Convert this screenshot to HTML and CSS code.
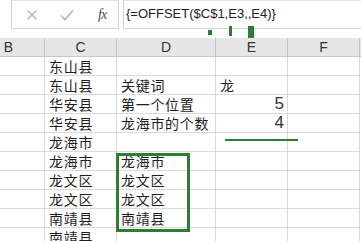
FILE: index.html
```html
<!DOCTYPE html>
<html lang="zh">
<head>
    <meta charset="UTF-8">
    <title>OFFSET</title>
    <link rel="stylesheet" href="styles.css">
</head>
<body>
    <div class="fbar">
        <div class="fx-box">
            <svg class="ico" width="12" height="12" viewBox="0 0 12 12"><path d="M1.5 1.5 L10.5 10.5 M10.5 1.5 L1.5 10.5" stroke="#b4b4b4" stroke-width="1.4" fill="none"/></svg>
            <svg class="ico" width="14" height="12" viewBox="0 0 14 12"><path d="M1 6.5 L5 10.5 L13 1.5" stroke="#b4b4b4" stroke-width="1.6" fill="none"/></svg>
            <span class="fx">fx</span>
        </div>
        <div class="formula">{=OFFSET($C$1,E3,,E4)}</div>
    </div>
    <div class="gap">
        <span class="mark m1"></span>
        <span class="mark m2"></span>
        <span class="mark m3"></span>
    </div>
    <div class="sheet">
        <div class="head">
            <div class="hc">B</div>
            <div class="hc">C</div>
            <div class="hc">D</div>
            <div class="hc">E</div>
            <div class="hc">F</div>
        </div>
        <div class="grid">
            <div class="c"></div><div class="c">东山县</div><div class="c"></div><div class="c"></div><div class="c"></div>
            <div class="c"></div><div class="c">东山县</div><div class="c">关键词</div><div class="c">龙</div><div class="c"></div>
            <div class="c"></div><div class="c">华安县</div><div class="c">第一个位置</div><div class="c num">5</div><div class="c"></div>
            <div class="c"></div><div class="c">华安县</div><div class="c">龙海市的个数</div><div class="c num">4</div><div class="c"></div>
            <div class="c"></div><div class="c">龙海市</div><div class="c"></div><div class="c"></div><div class="c"></div>
            <div class="c"></div><div class="c">龙海市</div><div class="c">龙海市</div><div class="c"></div><div class="c"></div>
            <div class="c"></div><div class="c">龙文区</div><div class="c">龙文区</div><div class="c"></div><div class="c"></div>
            <div class="c"></div><div class="c">龙文区</div><div class="c">龙文区</div><div class="c"></div><div class="c"></div>
            <div class="c"></div><div class="c">南靖县</div><div class="c">南靖县</div><div class="c"></div><div class="c"></div>
            <div class="c"></div><div class="c">南靖县</div><div class="c"></div><div class="c"></div><div class="c"></div>
        </div>
        <div class="underline"></div>
        <div class="sel"></div>
    </div>
</body>
</html>
```

FILE: styles.css
```css
body {
    margin: 0;
    padding: 0;
    width: 361px;
    height: 241px;
    overflow: hidden;
    background: #fff;
    font-family: "Liberation Sans", Arial, sans-serif;
    color: #222;
}
.fbar {
    display: flex;
    height: 29px;
    padding-left: 11px;
    gap: 4px;
    box-sizing: border-box;
}
.fx-box {
    width: 108px;
    border: 1px solid #d4d4d4;
    border-top-color: #e2e2e2;
    box-sizing: border-box;
    display: flex;
    align-items: center;
    padding-left: 14px;
    gap: 22px;
}
.ico {
    display: block;
}
.fx {
    font-family: "Liberation Serif", serif;
    font-style: italic;
    font-size: 14px;
    color: #4a4a4a;
    margin-left: 2px;
    letter-spacing: -1px;
}
.formula {
    flex: 1;
    border: 1px solid #d4d4d4;
    border-right: none;
    border-top-color: #e2e2e2;
    font-size: 13px;
    line-height: 26px;
    padding-left: 2px;
    color: #222;
}
.gap {
    position: relative;
    height: 9px;
}
.mark {
    position: absolute;
    background: #2f7d32;
    width: 4px;
}
.m1 { left: 208px; top: 1px; height: 5px; }
.m2 { left: 229px; top: -3px; width: 3px; height: 10px; }
.m3 { left: 248px; top: -3px; width: 6px; height: 13px; }
.sheet {
    position: relative;
    margin-left: -27px;
}
.head, .grid {
    display: grid;
    grid-template-columns: 72px 72px 99px 72px 72px;
}
.head {
    background: #e6e6e6;
    height: 19px;
    border-bottom: 1px solid #c8c8c8;
    box-sizing: border-box;
}
.hc {
    border-right: 1px solid #c4c4c4;
    text-align: center;
    font-size: 14px;
    line-height: 19px;
    color: #333;
}
.c {
    height: 19px;
    box-sizing: border-box;
    border-right: 1px solid #d9d9d9;
    border-bottom: 1px solid #d9d9d9;
    padding-left: 4px;
    font-family: "Noto Sans CJK SC", sans-serif;
    font-size: 14px;
    letter-spacing: 0.7px;
    line-height: 18px;
    white-space: nowrap;
    color: #1e1e1e;
}
.num {
    text-align: right;
    padding-right: 3px;
    font-family: "Liberation Sans Narrow", "Liberation Sans", sans-serif;
    font-size: 17px;
    letter-spacing: 0;
    color: #333;
}
.underline {
    position: absolute;
    left: 252px;
    top: 101px;
    width: 73px;
    height: 2px;
    background: #2f7d32;
}
.sel {
    position: absolute;
    left: 143px;
    top: 115px;
    width: 74px;
    height: 79px;
    border: 3px solid #2f7d32;
    box-sizing: border-box;
}
```
